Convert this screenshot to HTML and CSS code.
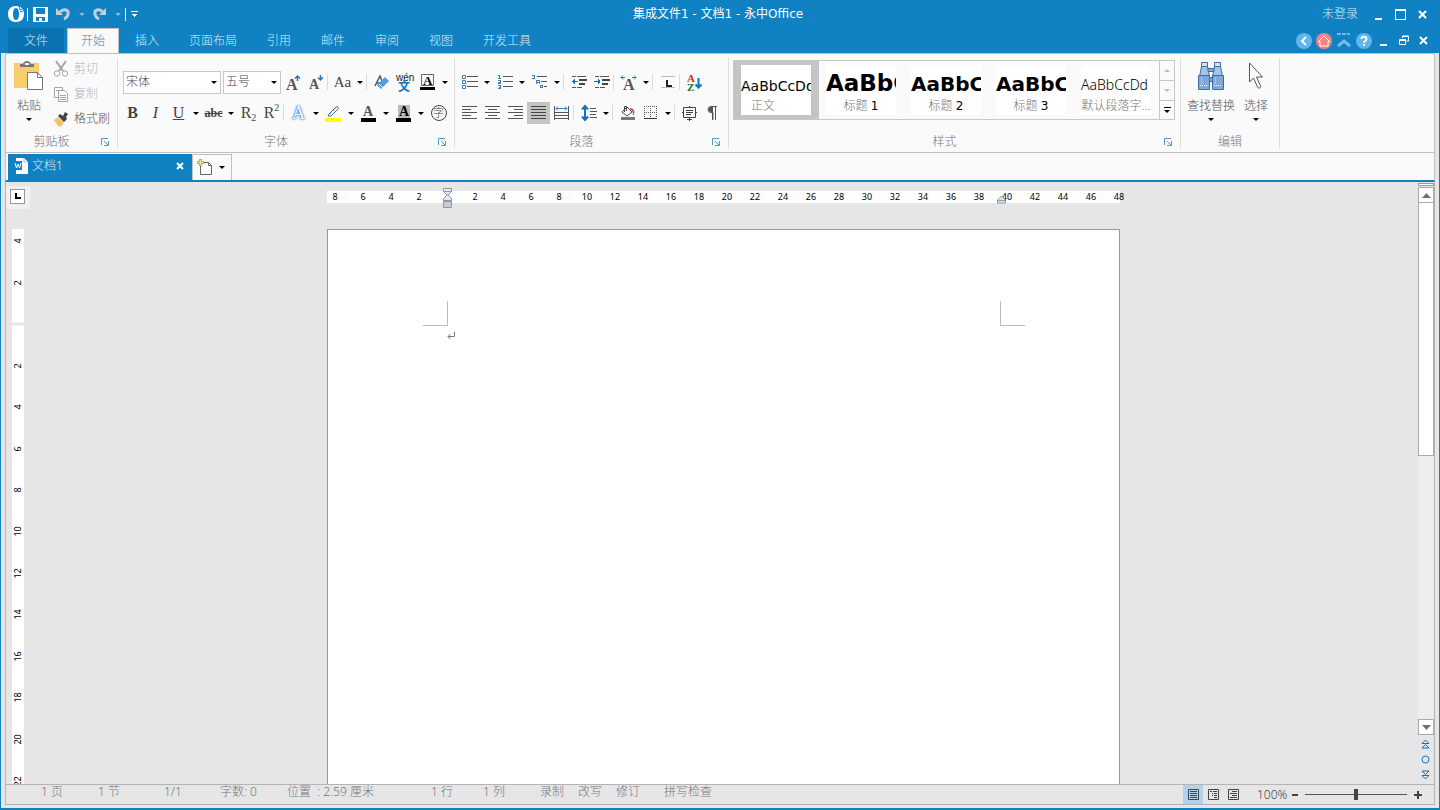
FILE: index.html
```html
<!DOCTYPE html>
<html lang="zh-CN">
<head>
<meta charset="utf-8">
<title>集成文件1 - 文档1 - 永中Office</title>
<link rel="stylesheet" href="styles.css">
</head>
<body>
<header class="titlebar">
  <div class="title-row">
    <div class="quick">
      <svg class="logo" width="17" height="18" viewBox="0 0 17 18"><path d="M8 1C3 1 0 4 0 9s3 8 8 8 8-3 8-8-3-8-8-8zm0 2c2 0 3 2 3 6s-1 6-3 6-3-2-3-6 1-6 3-6z" fill="#fff" fill-rule="evenodd"/><path d="M11 1l1 4 4-2M12 7l3-1" stroke="#1082c3" fill="none"/></svg>
      <i class="bar"></i>
      <button class="plain" aria-label="保存"><svg width="15" height="15" viewBox="0 0 15 15" shape-rendering="crispEdges"><path d="M0 0h15v15H0z" fill="#fff"/><path d="M3 1h9v6H3zM3 10h9v4H9v-3H6v3H3z" fill="#1082c3"/></svg></button>
      <button class="plain undo" aria-label="撤销"><svg width="15" height="14" viewBox="0 0 15 14"><path d="M4 5c4-4 9-2 8 2 0 2-2 4-4 5" fill="none" stroke="#bfd0db" stroke-width="3"/><path d="M0 1v7h7z" fill="#bfd0db"/></svg></button>
      <i class="caret pale"></i>
      <button class="plain" aria-label="恢复"><svg width="15" height="14" viewBox="0 0 15 14"><path d="M11 5C7 1 2 3 3 7c0 2 2 4 4 5" fill="none" stroke="#bfd0db" stroke-width="3"/><path d="M14 1v7H7z" fill="#bfd0db"/></svg></button>
      <i class="caret pale"></i>
      <i class="bar end"></i>
      <button class="plain" aria-label="自定义"><svg width="7" height="7" viewBox="0 0 7 7" shape-rendering="crispEdges"><path d="M0 0h7v1H0zM1 3h5v1H5v1H4v1H3V5H2V4H1z" fill="#fff"/></svg></button>
    </div>
    <h1 class="title">集成文件1 - 文档1 - 永中Office</h1>
    <div class="win">
      <a class="login" href="#">未登录</a>
      <button class="plain" aria-label="最小化"><svg width="11" height="11" viewBox="0 0 11 11"><path d="M2 9h7v2H2z" fill="#fff"/></svg></button>
      <button class="plain" aria-label="最大化"><svg width="11" height="11" viewBox="0 0 11 11" shape-rendering="crispEdges"><path d="M0 0h11v11H0zM1 2v8h9V2z" fill="#fff" fill-rule="evenodd"/></svg></button>
      <button class="plain" aria-label="关闭"><svg width="11" height="11" viewBox="0 0 11 11"><path d="M2 2l7 7M9 2l-7 7" stroke="#fff" stroke-width="2"/></svg></button>
    </div>
  </div>
  <nav class="tab-row">
    <button class="tab file">文件</button>
    <button class="tab active">开始</button>
    <button class="tab">插入</button>
    <button class="tab">页面布局</button>
    <button class="tab">引用</button>
    <button class="tab">邮件</button>
    <button class="tab">审阅</button>
    <button class="tab">视图</button>
    <button class="tab">开发工具</button>
    <div class="round">
      <button class="plain" aria-label="后退"><svg width="16" height="16" viewBox="0 0 16 16"><circle cx="8" cy="8" r="8" fill="#5eb6ec"/><path d="M10 4L6 8l4 4" fill="none" stroke="#fff" stroke-width="2"/></svg></button>
      <button class="plain" aria-label="主页"><svg width="16" height="16" viewBox="0 0 16 16"><circle cx="8" cy="8" r="8" fill="#fb8080"/><path d="M2.500 8.500L8 3l5.500 5.500H12V13H4V8.500z" fill="none" stroke="#fff"/></svg></button>
      <button class="plain" aria-label="收起功能区"><svg width="16" height="16" viewBox="0 0 16 16"><path d="M1 0h4v2H1zM6 0h4v2H6zM11 0h3v2h-3z" fill="#6fbce9"/><path d="M2 13l6-5 6 5" fill="none" stroke="#6fbce9" stroke-width="3"/></svg></button>
      <button class="plain" aria-label="帮助"><svg width="16" height="16" viewBox="0 0 16 16"><circle cx="8" cy="8" r="8" fill="#5eb6ec"/><path d="M5.500 6c0-3 5-3 5 0 0 2-2.500 2-2.500 4M8 11v2" fill="none" stroke="#fff" stroke-width="2"/></svg></button>
      <button class="plain" aria-label="最小化文档"><svg width="16" height="11" viewBox="0 0 16 11"><path d="M4 9h7v2H4z" fill="#fff"/></svg></button>
      <button class="plain" aria-label="还原文档"><svg width="16" height="11" viewBox="0 0 16 11"><path d="M6.500 3V1h6v5h-2M6 1.500h7M3.500 4.500h6v5h-6zM3 5.500h7" fill="none" stroke="#fff"/></svg></button>
      <button class="plain" aria-label="关闭文档"><svg width="16" height="11" viewBox="0 0 16 11"><path d="M4 2l7 7M11 2L4 9" stroke="#fff" stroke-width="2"/></svg></button>
    </div>
  </nav>
</header>

<div class="frame">
<section class="ribbon">
  <div class="group clipboard">
    <div class="body">
      <button class="big"><svg width="30" height="31" viewBox="0 0 30 31"><path d="M0 3h25v25H0z" fill="#f6cf6c"/><path d="M6 4h3c1-4 7-4 8 0h3v3H6z" fill="#777"/><path d="M11 3h4v2h-4z" fill="#fafafa"/><path d="M13.500 12.500h10l5 5v12h-15z" fill="#fff" stroke="#777"/><path d="M23.500 12.500v5h5" fill="none" stroke="#777"/></svg><span>粘贴</span><i class="caret"></i></button>
      <div class="stack">
        <button class="line off"><svg width="16" height="16" viewBox="0 0 16 16" fill="none" stroke="#a4a4a4"><path d="M3 0l7 10M13 0L6 10" stroke-width="2"/><circle cx="4" cy="12.500" r="2.700"/><circle cx="12" cy="12.500" r="2.700"/></svg>剪切</button>
        <button class="line off"><svg width="16" height="16" viewBox="0 0 16 16" fill="#fafafa" stroke="#a4a4a4"><path d="M1.500 1.500h8v10h-8z"/><path d="M5.500 4.500h6l3 3v8h-9zM7 9.500h6M7 11.500h6M7 13.500h6M3 4.500h2"/></svg>复制</button>
        <button class="line"><svg width="16" height="16" viewBox="0 0 16 16"><path d="M1 9l4-3 6 6-4 4-2-1z" fill="#f3c261"/><path d="M5 5l2-2 3 2 2-4 3 2-2 3 1 2-3 3z" fill="#444"/></svg>格式刷</button>
      </div>
    </div>
    <div class="foot"><span>剪贴板</span><button class="launch" aria-label="剪贴板选项"><svg width="8" height="8" viewBox="0 0 8 8"><use href="#launch"/></svg></button></div>
  </div>

  <div class="group font">
    <div class="body rows">
      <div class="row">
        <label class="combo wide"><select aria-label="字体"><option>宋体</option></select></label>
        <label class="combo"><select aria-label="字号"><option>五号</option></select></label>
        <button class="tool" aria-label="增大字号"><svg width="19" height="19" viewBox="0 0 19 19"><text x="3" y="17" class="g16">A</text><path d="M14.500 8V3M12 5.500L14.500 3 17 5.500" fill="none" stroke="#2f74b5" stroke-width="1.500"/></svg></button>
        <button class="tool" aria-label="减小字号"><svg width="19" height="19" viewBox="0 0 19 19"><text x="3" y="16" class="g14">A</text><path d="M14.500 2v5M12 4.500L14.500 7 17 4.500" fill="none" stroke="#2f74b5" stroke-width="1.500"/></svg></button>
        <i class="sep"></i>
        <button class="tool aa" aria-label="更改大小写">Aa</button><i class="caret"></i>
        <i class="sep"></i>
        <button class="tool" aria-label="清除格式"><svg width="17" height="17" viewBox="0 0 17 17"><path d="M2 12L7 2l2 5M3 9h5" stroke="#555" fill="none" stroke-width="1.500"/><path d="M12 3l4 4-8 8-4-4z" fill="#4aa0e2"/><path d="M6 10l4 4" stroke="#fff"/></svg></button>
        <button class="tool" aria-label="拼音指南"><svg width="18" height="18" viewBox="0 0 18 18"><text x="0" y="8" class="wen">wén</text><text x="2" y="18" class="han">文</text></svg></button>
        <button class="tool" aria-label="字符边框"><svg width="17" height="17" viewBox="0 0 17 17"><path d="M2.500.5h12v11h-12z" fill="none" stroke="#666"/><text x="4" y="11" class="g13 blk">A</text><path d="M1 13h15v3H1z"/></svg></button><i class="caret"></i>
      </div>
      <div class="row flush">
        <button class="tool serif b">B</button>
        <button class="tool serif i">I</button>
        <button class="tool serif u">U</button><i class="caret"></i>
        <button class="tool serif s">abc</button><i class="caret"></i>
        <button class="tool serif">R<sub>2</sub></button>
        <button class="tool serif">R<sup>2</sup></button>
        <i class="sep"></i>
        <button class="tool glow">A</button><i class="caret"></i>
        <button class="tool" aria-label="突出显示"><svg width="17" height="17" viewBox="0 0 17 17"><path d="M4 9l7-7c2-1 3 0 2 2l-7 7-3 0z" fill="#fff" stroke="#3f6fa0"/><path d="M5 9l6-6" stroke="#e66a3c" stroke-dasharray="2 2"/><path d="M0 13h16v4H0z" fill="#ff0"/></svg></button><i class="caret"></i>
        <button class="tool" aria-label="字体颜色"><svg width="17" height="17" viewBox="0 0 17 17"><text x="3" y="11" class="g14">A</text><path d="M1 13h15v4H1z"/></svg></button><i class="caret"></i>
        <button class="tool" aria-label="字符底纹"><svg width="17" height="17" viewBox="0 0 17 17"><path d="M3 0h12v13H3z" fill="#bbb"/><text x="4" y="11" class="g14 blk">A</text><path d="M1 13h15v4H1z"/></svg></button><i class="caret"></i>
        <button class="tool" aria-label="带圈字符"><span class="ring">字</span></button>
      </div>
    </div>
    <div class="foot"><span>字体</span><button class="launch" aria-label="字体选项"><svg width="8" height="8" viewBox="0 0 8 8"><use href="#launch"/></svg></button></div>
  </div>

  <div class="group para">
    <div class="body rows">
      <div class="row">
        <button class="tool" aria-label="项目符号"><svg width="16" height="14" viewBox="0 0 16 14"><path d="M.5.5h3v3h-3zM.5 5.500h3v3h-3zM.5 10.500h3v3h-3z" fill="none" stroke="#3f7fb8"/><path d="M5 1.500h11M5 6.500h11M5 11.500h11" stroke="#555"/></svg></button><i class="caret"></i>
        <button class="tool" aria-label="编号"><svg width="16" height="14" viewBox="0 0 16 14" shape-rendering="crispEdges"><path d="M1 .5h1.500v3M1 3.500h3M1 5.500h2.500v1.500H1.500v1.500h2.500M1 10.500h2.500v3H1M2 12h2" fill="none" stroke="#3f7fb8"/><path d="M6 1.500h10M6 6.500h10M6 11.500h10" stroke="#555"/></svg></button><i class="caret"></i>
        <button class="tool" aria-label="多级列表"><svg width="16" height="14" viewBox="0 0 16 14" shape-rendering="crispEdges"><path d="M0 .5h2v3M0 3.500h3M4.500 9V5.500h3V9M5 7.500h2M8.500 10.500h2v2h-2z" fill="none" stroke="#3f7fb8"/><path d="M5 1.500h10M9 6.500h6M12 11.500h3" stroke="#555"/></svg></button><i class="caret"></i>
        <i class="sep"></i>
        <button class="tool" aria-label="减少缩进"><svg width="16" height="14" viewBox="0 0 16 14" shape-rendering="crispEdges"><use href="#lines"/><path d="M1 6.500h6M3 4v5M2 5v3" stroke="#1473bd"/></svg></button>
        <button class="tool" aria-label="增加缩进"><svg width="16" height="14" viewBox="0 0 16 14" shape-rendering="crispEdges"><use href="#lines"/><path d="M0 6.500h6M4 4v5M5 5v3" stroke="#1473bd"/></svg></button>
        <i class="sep"></i>
        <button class="tool" aria-label="中文版式"><svg width="17" height="17" viewBox="0 0 17 17"><text x="3" y="16" class="g16">A</text><path d="M1 3.500h4M3 1.500l-2 2 2 2M12 3.500h4M14 1.500l2 2-2 2" fill="none" stroke="#2f74b5"/></svg></button><i class="caret"></i>
        <i class="sep"></i>
        <button class="tool" aria-label="制表位"><svg width="16" height="14" viewBox="0 0 16 14" shape-rendering="crispEdges"><path d="M1 1.500h14M1 12.500h14" stroke="#bbb"/><path d="M6 5h2v5h4v2H6z" fill="#222"/></svg></button>
        <i class="sep"></i>
        <button class="tool" aria-label="排序"><svg width="17" height="17" viewBox="0 0 17 17"><text x="1" y="8" class="az red">A</text><text x="1" y="17" class="az green">Z</text><path d="M12.500 4v9M9.500 10.500l3 3 3-3" fill="none" stroke="#1473bd" stroke-width="2"/></svg></button>
      </div>
      <div class="row">
        <button class="tool" aria-label="左对齐"><svg width="15" height="14" viewBox="0 0 15 14"><path d="M0 .5h15M0 3.500h9M0 6.500h15M0 9.500h9M0 12.500h15" stroke="#555"/></svg></button>
        <button class="tool" aria-label="居中"><svg width="15" height="14" viewBox="0 0 15 14"><path d="M0 .5h15M3 3.500h9M0 6.500h15M3 9.500h9M0 12.500h15" stroke="#555"/></svg></button>
        <button class="tool" aria-label="右对齐"><svg width="15" height="14" viewBox="0 0 15 14"><path d="M0 .5h15M6 3.500h9M0 6.500h15M6 9.500h9M0 12.500h15" stroke="#555"/></svg></button>
        <button class="tool on" aria-label="两端对齐"><svg width="15" height="14" viewBox="0 0 15 14"><path d="M0 .5h15M0 3.500h15M0 6.500h15M0 9.500h15M0 12.500h15" stroke="#444"/></svg></button>
        <button class="tool" aria-label="分散对齐"><svg width="15" height="16" viewBox="0 0 15 16"><path d="M.5 1v14M14.500 1v14M0 7.500h15M0 10.500h15M0 13.500h15" fill="none" stroke="#555"/><path d="M2 3.500h11M4 1.500l-2 2 2 2M11 1.500l2 2-2 2" fill="none" stroke="#3f7fb8"/></svg></button>
        <i class="sep"></i>
        <button class="tool" aria-label="行距"><svg width="16" height="16" viewBox="0 0 16 16"><path d="M4 2v12M1 4.500L4 1l3 3.500M1 11.500L4 15l3-3.500" fill="none" stroke="#1473bd" stroke-width="2"/><path d="M9 3.500h6M9 6.500h7M9 9.500h6M9 12.500h7" stroke="#555"/></svg></button><i class="caret"></i>
        <i class="sep"></i>
        <button class="tool" aria-label="底纹"><svg width="16" height="16" viewBox="0 0 16 16"><path d="M2 7l5-5 5 5-5 4z" fill="#fff" stroke="#444"/><path d="M4.500 7V1.500h2V6" fill="none" stroke="#444"/><path d="M10 3c4 0 6 4 3 8 0-3 0-5-3-7z" fill="#e9413b"/><path d="M1 12h14v3H1z" fill="#777"/></svg></button>
        <button class="tool" aria-label="边框"><svg width="14" height="14" viewBox="0 0 14 14" shape-rendering="crispEdges"><path d="M0 .5h13M0 6.500h13M.5 0v13M6.500 0v13M12.500 0v13" stroke="#555" stroke-dasharray="1 1"/><path d="M0 12.500h13" stroke="#333"/></svg></button><i class="caret"></i>
        <i class="sep"></i>
        <button class="tool" aria-label="段落布局"><svg width="15" height="15" viewBox="0 0 15 15"><path d="M1.500 1.500h12v10h-12z" fill="none" stroke="#444"/><path d="M4 4.500h7M4 6.500h7M4 8.500h5M0 6.500h2M13 6.500h2M5 13.500h5M7.500 0v2M7.500 12v3" stroke="#444"/></svg></button>
        <button class="tool" aria-label="段落标记"><svg width="11" height="14" viewBox="0 0 11 14"><path d="M10 .5H4a3 3 0 0 0 0 6h2v7M5.500 1v13M8.500 1v13" fill="none" stroke="#555"/><path d="M5 1H4a2 2 0 0 0 0 5h1z" fill="#555"/></svg></button>
      </div>
    </div>
    <div class="foot"><span>段落</span><button class="launch" aria-label="段落选项"><svg width="8" height="8" viewBox="0 0 8 8"><use href="#launch"/></svg></button></div>
  </div>

  <div class="group styles">
    <div class="body">
      <div class="gallery">
        <button class="style chosen"><span class="card"><span class="demo text">AaBbCcDd</span><span class="name first">正文</span></span></button>
        <button class="style"><span class="card"><span class="demo h1">AaBbC</span><span class="name">标题 <b>1</b></span></span></button>
        <button class="style"><span class="card"><span class="demo h2">AaBbC</span><span class="name">标题 <b>2</b></span></span></button>
        <button class="style"><span class="card"><span class="demo h2">AaBbC</span><span class="name">标题 <b>3</b></span></span></button>
        <button class="style"><span class="card"><span class="demo thin">AaBbCcDd</span><span class="name">默认段落字...</span></span></button>
        <div class="spin">
          <button aria-label="上一行"><i class="caret up"></i></button>
          <button aria-label="下一行"><i class="caret grey"></i></button>
          <button aria-label="更多样式"><i class="caret more"></i></button>
        </div>
      </div>
    </div>
    <div class="foot"><span>样式</span><button class="launch" aria-label="样式选项"><svg width="8" height="8" viewBox="0 0 8 8"><use href="#launch"/></svg></button></div>
  </div>

  <div class="group edit">
    <div class="body">
      <button class="big"><svg width="28" height="31" viewBox="0 0 28 31"><g fill="#7fa9d6" stroke="#3c6ea5"><path d="M4.500 2.500h6v4h-6zM17.500 2.500h6v4h-6z" fill="#d5e5f5"/><path d="M4.500 6.500h6l2 10h-10zM17.500 6.500h6l2 10h-10z" fill="#a5c5e6"/><path d="M1.500 15.500h11v14h-11zM15.500 15.500h11v14h-11z"/><path d="M11 8.500h6v3h-6zM12.500 17.500h3v4h-3z"/></g><path d="M3 25.500h8M17 25.500h8" stroke="#fff" stroke-dasharray="1 1"/><path d="M4.500 17v7M18.500 17v7" stroke="#a5c5e6"/></svg><span>查找替换</span><i class="caret"></i></button>
      <button class="big"><svg width="17" height="31" viewBox="0 0 17 31"><path d="M1.500 3v19l4-4 4 9c1 2 4 1 3-1l-4-9h6z" fill="#fff" stroke="#555"/></svg><span>选择</span><i class="caret"></i></button>
    </div>
    <div class="foot"><span>编辑</span></div>
  </div>
</section>

<div class="doctabs">
  <div class="doctab">
    <svg width="15" height="16" viewBox="0 0 15 16"><path d="M3 0h8l4 4v12H3z" fill="#fff"/><path d="M11 0v4h4" fill="none" stroke="#9cc8e4"/><path d="M0 3h9v9H0z" fill="#1082c3"/><path d="M2 5l1.500 5L5 6l1.500 4L8 5" fill="none" stroke="#fff"/></svg>
    <span>文档1</span>
    <button class="plain" aria-label="关闭标签"><svg width="8" height="8" viewBox="0 0 8 8"><path d="M1 1l6 6M7 1L1 7" stroke="#fff" stroke-width="2"/></svg></button>
  </div>
  <button class="newdoc" aria-label="新建文档"><svg width="17" height="17" viewBox="0 0 17 17"><path d="M3.500 3.500h8l3 3v9h-11z" fill="#fff" stroke="#666"/><path d="M11.500 3.500v3h3" fill="none" stroke="#666"/><path d="M3.500 0v7M0 3.500h7" stroke="#ef9d33" stroke-width="3"/><path d="M3.500 1v5M1 3.500h5" stroke="#ffe2a8"/></svg><i class="caret"></i></button>
</div>

<main class="work">
  <aside class="side">
    <div class="corner"><button aria-label="制表符"><svg width="7" height="7" viewBox="0 0 7 7"><path d="M1 0h2v4h4v2H1z"/></svg></button></div>
    <div class="vrule"><div class="vnums">
      <span>4</span><span>2</span><span class="zero"></span><span>2</span><span>4</span><span>6</span><span>8</span><span>10</span><span>12</span><span>14</span><span>16</span><span>18</span><span>20</span><span>22</span>
    </div></div>
  </aside>
  <div class="canvas">
    <div class="hrule">
      <div class="hnums">
        <span>8</span><span>6</span><span>4</span><span>2</span><span></span><span>2</span><span>4</span><span>6</span><span>8</span><span>10</span><span>12</span><span>14</span><span>16</span><span>18</span><span>20</span><span>22</span><span>24</span><span>26</span><span>28</span><span>30</span><span>32</span><span>34</span><span>36</span><span>38</span><span>40</span><span>42</span><span>44</span><span>46</span><span>48</span>
      </div>
      <svg class="mark left" width="9" height="21" viewBox="0 0 9 21"><g fill="#e3e9f0" stroke="#8f98a3"><path d="M.5.5h8v3l-4 4-4-4z"/><path d="M.5 12.500v-2l4-4 4 4v2z"/><path d="M.5 12.500h8v7h-8z" fill="#c3ccd6"/></g><path d="M0 3.500h9M0 13.500h9" stroke="#8f98a3"/></svg>
      <svg class="mark right" width="9" height="9" viewBox="0 0 9 9"><path d="M.5 5L4.500 1l4 4v3h-8z" fill="#dde5ee" stroke="#8f98a3"/><path d="M0 5.500h9" stroke="#8f98a3"/></svg>
    </div>
    <article class="page">
      <div class="crops"><i class="crop l"></i><i class="crop r"></i></div>
      <p class="para-mark"><svg width="8" height="8" viewBox="0 0 8 8"><path d="M6.500 0v4.500H0M2.500 2L0 4.500 2.500 7" fill="none" stroke="#777"/></svg></p>
    </article>
  </div>
  <aside class="scroll">
    <i class="split"></i>
    <button aria-label="向上滚动"><svg width="9" height="5" viewBox="0 0 9 5"><path d="M0 5l4.500-5L9 5z" fill="#707070"/></svg></button>
    <div class="track"><div class="thumb"></div></div>
    <button aria-label="向下滚动"><svg width="9" height="5" viewBox="0 0 9 5"><path d="M0 0l4.500 5L9 0z" fill="#707070"/></svg></button>
    <div class="jump">
      <button class="plain" aria-label="上一页"><svg width="9" height="10" viewBox="0 0 9 10"><path d="M1 4.500l3.500-3.500L8 4.500M1 9l3.500-3.500L8 9zM1 4.500h7" fill="none" stroke="#1473bd"/></svg></button>
      <button class="plain" aria-label="选择浏览对象"><svg width="9" height="9" viewBox="0 0 9 9"><circle cx="4.500" cy="4.500" r="3.500" fill="none" stroke="#1473bd"/></svg></button>
      <button class="plain" aria-label="下一页"><svg width="9" height="10" viewBox="0 0 9 10"><path d="M1 5.500L4.500 9 8 5.500zM1 1l3.500 3.500L8 1z" fill="none" stroke="#1473bd"/></svg></button>
    </div>
  </aside>
</main>

<footer class="status">
  <div class="info">
    <span>1 页</span><span>1 节</span><span>1/1</span><span>字数: 0</span><span>位置 &nbsp;: 2.59 厘米</span><span>1 行</span><span>1 列</span><span>录制</span><span>改写</span><span>修订</span><span>拼写检查</span>
  </div>
  <div class="views">
    <button class="on" aria-label="页面视图"><svg width="11" height="11" viewBox="0 0 11 11"><path d="M.5.5h10v10H.5zM2 2.500h7M2 4.500h7M2 6.500h7M2 8.500h7" fill="none" stroke="#444"/></svg></button>
    <button aria-label="大纲视图"><svg width="11" height="11" viewBox="0 0 11 11"><path d="M.5.5h10v10H.5zM2 2.500h2M5 2.500h4M4 4.500h1M6 4.500h3M4 6.500h1M6 6.500h3M6 8.500h3" fill="none" stroke="#444"/></svg></button>
    <button aria-label="草稿视图"><svg width="11" height="11" viewBox="0 0 11 11"><path d="M.5.5h10v10H.5zM4 2.500h5M2 4.500h7M4 6.500h5M2 8.500h7" fill="none" stroke="#444"/></svg></button>
  </div>
  <span class="percent">100%</span>
  <button class="plain" aria-label="缩小"><svg width="8" height="8" viewBox="0 0 8 8"><path d="M1 3h6v2H1z" fill="#444"/></svg></button>
  <input class="zoom" type="range" min="0" max="100" value="50" aria-label="缩放">
  <button class="plain" aria-label="放大"><svg width="8" height="8" viewBox="0 0 8 8"><path d="M0 3h8v2H0zM3 0h2v8H3z" fill="#444"/></svg></button>
</footer>
</div>

<svg class="defs" width="0" height="0"><defs>
  <g id="launch"><path d="M.5 7V.5H7M3 3l4 4M7.500 3v4.500H3" fill="none" stroke="#5b93c9"/></g>
  <g id="lines"><path d="M1 1.500h4M6 1.500h9M1 12.500h4M6 12.500h5" stroke="#555"/><path d="M8 5h8M8 9h6" stroke="#444" stroke-width="2"/></g>
</defs></svg>
</body>
</html>
```
FILE: styles.css
```css
* { box-sizing: border-box; }
body {
  margin: 0;
  height: 100vh;
  display: flex;
  flex-direction: column;
  overflow: hidden;
  background: #1082c3;
  color: #555;
  font: 300 12px/16px "Noto Sans", "Noto Sans CJK SC", sans-serif;
}
button { margin: 0; padding: 0; border: 0; background: none; color: inherit; font: inherit; }
svg { display: block; flex: none; overflow: visible; }
i { font-style: normal; flex: none; }
.defs { position: absolute; }
.plain { display: flex; align-items: center; justify-content: center; }

.caret { width: 12px; display: flex; justify-content: center; }
.caret::after {
  content: "";
  border: 3px solid transparent;
  border-top-color: #000;
  border-bottom: 0;
}
.caret.pale { width: 5px; }
.caret.pale::after { border-top-color: #8fb8d3; }
.caret.grey::after { border-top-color: #bbb; }
.caret.up::after { border-top: 0; border-bottom: 3px solid #bbb; }
.caret.more { width: 7px; padding-top: 2px; border-top: 1px solid #000; }

/* title bar */
.titlebar { color: #d8eaf5; }
.title-row {
  display: grid;
  grid-template-columns: 1fr auto 1fr;
  align-items: center;
  height: 28px;
  padding: 0 12px 0 8px;
}
.quick { display: flex; align-items: center; gap: 8px; }
.quick .bar { width: 1px; height: 13px; background: #fff; }
.quick .logo + .bar { margin-left: -6px; }
.quick .bar.end { margin-left: -3px; }
.quick .bar + .plain { margin-left: -3px; }
.title { margin: 0; font: 12px/16px "DejaVu Sans", "Noto Sans CJK SC", sans-serif; color: #fff; }
.win { display: flex; align-items: center; justify-content: flex-end; gap: 11px; }
.login { color: #d8eaf5; text-decoration: none; margin-right: 4px; }
.tab-row { display: flex; height: 25px; padding: 0 8px; }
.tab { padding: 0 15px; }
.tab.file { width: 56px; background: #0b72b0; margin-right: 3px; }
.tab.active {
  width: 52px;
  padding: 0;
  background: #fafafa;
  border: 1px solid #c0c0c0;
  border-bottom: 0;
  color: #3f87b5;
  margin-right: 1px;
}
.round { margin-left: auto; display: flex; gap: 4px; align-items: center; }

/* window frame */
.frame {
  flex: 1;
  min-height: 0;
  display: flex;
  flex-direction: column;
  margin: 0 1px 2px;
  padding: 0 4px 3px;
  background: #e6e6e6;
}
.ribbon {
  display: flex;
  height: 100px;
  padding: 4px 0;
  background: #fafafa;
  border: 1px solid #c0c0c0;
}
.group {
  display: flex;
  flex-direction: column;
  justify-content: space-between;
  border-right: 1px solid #dedede;
}
.body { display: flex; }
.foot { display: flex; align-items: center; gap: 4px; height: 13px; color: #777; padding-right: 8px; }
.foot span { flex: 1; text-align: center; }
.launch { width: 8px; }
.clipboard { width: 112px; }
.font { width: 337px; }
.para { width: 274px; }
.styles { width: 452px; }
.edit { width: 99px; }
.edit .foot { padding: 0; }

.big { display: flex; flex-direction: column; align-items: center; height: 66px; }
.big span { margin: 7px 0 4px; }
.clipboard .big { width: 46px; padding-top: 2px; }
.edit .body { padding-left: 6px; gap: 3px; }
.edit .big { min-width: 36px; padding-top: 2px; }
.stack { display: flex; flex-direction: column; gap: 9px; padding-top: 3px; }
.line { display: flex; align-items: center; gap: 5px; height: 16px; margin-left: 1px; }
.line.off { color: #b0b4ba; }

.rows { flex-direction: column; gap: 9px; padding: 13px 0 0 3px; }
.font .rows { padding-left: 5px; }
.row { display: flex; align-items: center; height: 22px; }
.row.flush { margin-left: -2px; }
.tool { width: 23px; height: 22px; display: flex; align-items: center; justify-content: center; flex: none; color: #444; }
.tool.on { background: #c4c4c4; }
.sep { width: 4px; height: 16px; border-left: 1px solid #dcdcdc; }
.combo { position: relative; width: 58px; }
.combo.wide { width: 98px; margin-right: 2px; }
.combo select {
  appearance: none;
  display: block;
  width: 100%;
  height: 23px;
  padding: 0 2px;
  border: 1px solid #c8c8c8;
  border-radius: 0;
  background: #fff;
  color: #444;
  font: inherit;
}
.combo::after {
  content: "";
  position: absolute;
  right: 4px;
  top: 10px;
  border: 3px solid transparent;
  border-top-color: #000;
  border-bottom: 0;
}
.serif, .aa { font: 16px/20px "Liberation Serif", serif; }
.aa { font-size: 15px; }
.serif.b { font-weight: 700; }
.serif.i { font-style: italic; }
.serif.u { text-decoration: underline; }
.serif.s { font-size: 12px; font-weight: 700; text-decoration: line-through; }
.serif sub, .serif sup { font-size: 10px; line-height: 12px; }
.serif sub { align-self: flex-end; }
.serif sup { align-self: flex-start; }
.glow { font: 18px/20px "Liberation Serif", serif; color: #fff; text-shadow: 0 0 1px #1e6fd9, 0 0 2px #1e6fd9, 0 0 3px #5aa2f5; }
.ring { width: 16px; height: 16px; border: 1px solid #444; border-radius: 50%; font-size: 11px; line-height: 13px; text-align: center; }
.g16, .g14, .g13 { font: 700 16px "Liberation Serif", serif; fill: #555; }
.g14 { font-size: 14px; }
.g13 { font-size: 13px; }
.blk { fill: #000; }
.wen { font: 10px "Liberation Sans", sans-serif; fill: #222; }
.han { font: 700 12px "Noto Sans CJK SC", sans-serif; fill: #1473bd; }
.az { font: 700 11px "Liberation Serif", serif; }
.red { fill: #d8232a; }
.green { fill: #0a7a1e; }

.styles .body { padding: 2px 4px 0; }
.gallery { display: flex; width: 442px; height: 60px; border: 1px solid #c8c8c8; }
.style { width: 85px; flex: none; display: flex; align-items: center; justify-content: flex-start; padding-left: 7px; }
.style.chosen { background: #c4c4c4; }
.card { display: flex; flex-direction: column; justify-content: flex-end; width: 70px; height: 50px; overflow: hidden; background: #fff; }
.demo { height: 30px; font: 14px/28px "DejaVu Sans", sans-serif; color: #000; text-align: left; white-space: nowrap; overflow: hidden; }
.demo.text { line-height: 36px; }
.demo.h1 { font-size: 23px; line-height: 30px; font-weight: 700; }
.demo.h2 { font-size: 20px; line-height: 32px; font-weight: 700; }
.demo.thin { font: 300 14px/34px "Noto Sans", sans-serif; }
.name { padding: 0 0 1px; text-align: center; white-space: nowrap; color: #777; }
.name.first { text-align: left; padding-left: 10px; }
.name b { font: 12px "DejaVu Sans", sans-serif; color: #000; }
.spin { flex: 1; display: grid; grid-template-rows: repeat(3, 1fr); border-left: 1px solid #c8c8c8; }
.spin button { display: flex; align-items: center; justify-content: center; }
.spin button + button { border-top: 1px solid #c8c8c8; }

/* document tabs */
.doctabs {
  display: flex;
  align-items: flex-end;
  height: 29px;
  padding-left: 2px;
  background: #fafafa;
  border: 1px solid #c0c0c0;
  border-top: 0;
  border-bottom: 2px solid #1082c3;
}
.doctab { display: flex; align-items: center; gap: 4px; width: 184px; height: 26px; padding: 0 8px 2px 5px; background: #1082c3; color: #d8eaf5; }
.doctab span { flex: 1; }
.newdoc { display: flex; align-items: center; gap: 2px; width: 40px; height: 26px; padding-left: 4px; border: 1px solid #c0c0c0; border-bottom: 0; }

/* workspace */
.work { flex: 1; min-height: 0; display: grid; grid-template-columns: 24px 1fr 16px; grid-template-rows: minmax(0, 1fr); border: solid #b4b4b8; border-width: 0 1px; }
.side { display: flex; flex-direction: column; align-items: flex-start; padding-top: 4px; }
.corner { padding: 3px 5px 5px 4px; background: #f0f0f0; margin-bottom: 20px; }
.corner button { display: flex; align-items: center; justify-content: center; width: 15px; height: 15px; border: 1px solid #999; background: #fff; }
.vrule { flex: 1; min-height: 0; width: 12px; margin-left: 6px; overflow: hidden; background: #fff; }
.vnums { display: flex; flex-direction: column; height: 582px; margin-top: -9px; }
.vnums span { flex: 1; display: flex; align-items: center; justify-content: center; writing-mode: vertical-rl; transform: rotate(180deg); }
.vnums .zero::after { content: ""; width: 12px; height: 3px; background: #e6e6e6; }
.vnums, .hnums { color: #000; font: 9px/12px "Noto Sans", sans-serif; }
.canvas { display: flex; flex-direction: column; align-items: center; padding: 9px 1px 0 0; }
.hrule { position: relative; width: 793px; height: 12px; margin-bottom: 26px; background: #fff; flex: none; }
.hnums { display: flex; margin: 0 -6px; }
.hnums span { width: 28px; flex: none; text-align: center; }
.mark { position: absolute; }
.mark.left { left: 116px; top: -3px; }
.mark.right { left: 670px; top: 4px; }
.page { flex: 1; width: 793px; padding-top: 71px; background: #fff; border: 1px solid #999; border-bottom: 0; }
.crops { display: flex; justify-content: space-between; padding: 0 94px 0 95px; }
.crop { width: 25px; height: 25px; border-bottom: 1px solid #bbb; }
.crop.l { border-right: 1px solid #bbb; }
.crop.r { border-left: 1px solid #bbb; }
.para-mark { margin: 0; padding: 6px 0 0 120px; }

.scroll { display: flex; flex-direction: column; padding-top: 1px; }
.scroll .split { height: 3px; border: 1px solid #999; background: #fff; margin-bottom: 1px; }
.scroll > button { display: flex; align-items: center; justify-content: center; height: 16px; flex: none; border: 1px solid #aaa; background: #fff; }
.track { flex: 1; background: #ededed; }
.thumb { height: 49%; background: #fff; border: 1px solid #aaa; border-top: 0; }
.jump { display: flex; flex-direction: column; align-items: center; gap: 6px; padding: 4px 2px 4px 0; }

/* status bar */
.status { display: flex; align-items: center; height: 21px; padding-right: 12px; border: 1px solid #b4b4b8; color: #777; }
.info { flex: 1; display: grid; grid-template-columns: 57px 66px 56px 67px 144px 52px 57px 38px 38px 48px auto; padding: 0 0 5px 35px; white-space: nowrap; }
.views { display: flex; align-self: stretch; margin-right: 14px; }
.views button { width: 20px; display: flex; align-items: center; justify-content: center; }
.views .on { background: #b3d1ec; }
.percent { width: 34px; color: #444; }
.zoom { appearance: none; width: 102px; height: 12px; margin: 0 7px 0 6px; background: linear-gradient(#555, #555) center / 100% 1px no-repeat; }
.zoom::-webkit-slider-thumb { appearance: none; width: 4px; height: 11px; background: #444; }
```
